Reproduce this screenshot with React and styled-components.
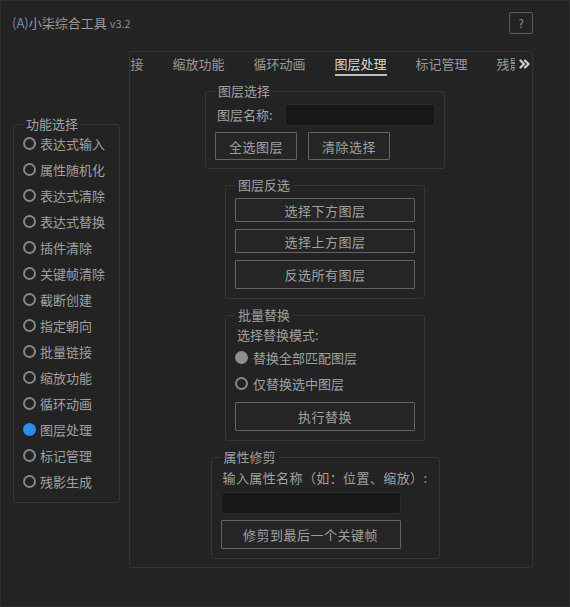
import { useLayoutEffect, useRef } from 'react'
import styled, { createGlobalStyle } from 'styled-components'

const GlobalStyle = createGlobalStyle`
    html, body {
        margin: 0;
        padding: 0;
        background: #232323;
    }
    * {
        box-sizing: border-box;
    }
`

const features = [
    '表达式输入', '属性随机化', '表达式清除', '表达式替换', '插件清除', '关键帧清除', '截断创建',
    '指定朝向', '批量链接', '缩放功能', '循环动画', '图层处理', '标记管理', '残影生成',
]

const ACTIVE = '图层处理'
// the tab strip is scrolled: tabs before this one are out of view
const FIRST_VISIBLE_TAB = '批量链接'

const Window = styled.div`
    width: 570px;
    height: 607px;
    background: #232323;
    border: 1px solid #2e2e2e;
    font-family: "Noto Sans CJK SC", "Liberation Sans", sans-serif;
    font-size: 13px;
    color: #a0a0a0;
    display: flex;
    flex-direction: column;
`

const Header = styled.div`
    height: 22px;
    margin-top: 11px;
    padding: 0 36px 0 11px;
    display: flex;
    align-items: center;
    justify-content: space-between;
`

const Title = styled.div`
    display: flex;
    align-items: baseline;
    line-height: 18px;
    color: #9a9a9a;

    .tag {
        color: #7589a6;
    }

    .version {
        font-size: 11px;
        margin-left: 3px;
        color: #8c8c8c;
    }
`

const HelpButton = styled.button`
    width: 24px;
    height: 22px;
    padding: 0;
    background: transparent;
    border: 1px solid #5c5c5c;
    border-radius: 2px;
    color: #9a9a9a;
    font-family: inherit;
    font-size: 11px;
    line-height: 1;
`

const Body = styled.div`
    margin-top: 17px;
    padding-left: 12px;
    display: flex;
    align-items: center;
    gap: 9px;
`

const Field = styled.fieldset`
    margin: 0;
    width: ${({ $w }) => $w}px;
    padding: 0 9px ${({ $pb }) => $pb ?? 8}px;
    border: 1px solid #363636;
    border-radius: 3px;
    display: flex;
    flex-direction: column;
    flex-shrink: 0;
`

const Legend = styled.legend`
    padding: 0 3px;
    line-height: 16px;
    color: #a0a0a0;
`

const RadioList = styled.div`
    margin-top: -2px;
    display: flex;
    flex-direction: column;
`

const RadioRow = styled.div`
    height: 26px;
    display: flex;
    align-items: center;
    gap: ${({ $gap }) => $gap ?? 5}px;
    color: #a0a0a0;
`

const RadioDot = styled.span`
    width: 13px;
    height: 13px;
    border-radius: 50%;
    flex-shrink: 0;
    border: 2px solid ${({ $state }) => ($state === 'on' ? '#2d8cec' : $state === 'grey' ? '#8e8e8e' : '#878787')};
    background: ${({ $state }) => ($state === 'on' ? '#2d8cec' : $state === 'grey' ? '#8e8e8e' : 'transparent')};
`

const Panel = styled.div`
    width: 404px;
    height: 517px;
    border: 1px solid #343434;
    border-radius: 3px;
    display: flex;
    flex-direction: column;
`

const TabBar = styled.div`
    height: 24px;
    display: flex;
    flex-shrink: 0;
`

const TabStrip = styled.div`
    flex: 1;
    position: relative;
    overflow: hidden;
`

const TabTrack = styled.div`
    display: flex;
    width: max-content;
`

const Tab = styled.div`
    padding: 3px 13.5px 0;
    flex-shrink: 0;
`

const TabLabel = styled.div`
    padding: 0 1px;
    display: flex;
    flex-direction: column;
    line-height: 18px;
    white-space: nowrap;
    color: ${({ $active }) => ($active ? '#d6d6d6' : '#989898')};

    &::after {
        content: '';
        height: 2px;
        margin-top: 1px;
        background: ${({ $active }) => ($active ? '#bdbdbd' : 'transparent')};
    }
`

const MoreButton = styled.div`
    width: 17px;
    display: flex;
    align-items: center;
    justify-content: center;
    padding-left: 2px;
`

const Content = styled.div`
    padding: 7px 12px 0 0;
    display: flex;
    flex-direction: column;
    align-items: center;
    gap: 8px;
`

const Row = styled.div`
    display: flex;
    align-items: center;
    gap: ${({ $gap }) => $gap ?? 0}px;
    margin-top: ${({ $mt }) => $mt ?? 0}px;
`

const Label = styled.div`
    width: ${({ $w }) => ($w ? `${$w}px` : 'auto')};
    padding-left: 2px;
    line-height: 18px;
    margin-top: ${({ $mt }) => $mt ?? 0}px;
    letter-spacing: ${({ $ls }) => $ls ?? 0}px;
    white-space: nowrap;
    color: #a0a0a0;
`

const TextInput = styled.input`
    width: ${({ $w }) => $w}px;
    height: 22px;
    margin-top: ${({ $mt }) => $mt ?? 0}px;
    background: #171717;
    border: 1px solid #2c2c2c;
    border-radius: 3px;
    outline: none;
`

const Button = styled.button`
    width: ${({ $w }) => $w}px;
    height: ${({ $h }) => $h}px;
    margin-top: ${({ $mt }) => $mt ?? 0}px;
    padding: 0;
    background: #252525;
    border: 1px solid #636363;
    border-radius: 1px;
    color: #a0a0a0;
    font-family: inherit;
    font-size: 13px;
    letter-spacing: 0.5px;
`

const App = () => {
    const stripRef = useRef(null)
    const activeRef = useRef(null)

    useLayoutEffect(() => {
        if (stripRef.current && activeRef.current) {
            stripRef.current.scrollLeft = activeRef.current.offsetLeft - 190
        }
    }, [])

    const tabs = features.slice(features.indexOf(FIRST_VISIBLE_TAB))

    return (
        <Window>
            <GlobalStyle />
            <Header>
                <Title>
                    <span className="tag">(A)</span>
                    <span>小柒综合工具</span>
                    <span className="version">v3.2</span>
                </Title>
                <HelpButton>?</HelpButton>
            </Header>

            <Body>
                <Field $w={107}>
                    <Legend>功能选择</Legend>
                    <RadioList>
                        {features.map(name => (
                            <RadioRow key={name} $gap={4}>
                                <RadioDot $state={name === ACTIVE ? 'on' : 'off'} />
                                {name}
                            </RadioRow>
                        ))}
                    </RadioList>
                </Field>

                <Panel>
                    <TabBar>
                        <TabStrip ref={stripRef}>
                            <TabTrack>
                                {tabs.map(name => (
                                    <Tab key={name} ref={name === ACTIVE ? activeRef : null}>
                                        <TabLabel $active={name === ACTIVE}>{name}</TabLabel>
                                    </Tab>
                                ))}
                            </TabTrack>
                        </TabStrip>
                        <MoreButton>
                            <svg width="11" height="10" viewBox="0 0 11 10" fill="none" stroke="#cfcfcf" strokeWidth="2.2" strokeLinecap="round" strokeLinejoin="round">
                                <path d="M1.5 1.5 L5 5 L1.5 8.5" />
                                <path d="M6 1.5 L9.5 5 L6 8.5" />
                            </svg>
                        </MoreButton>
                    </TabBar>

                    <Content>
                        <Field $w={240}>
                            <Legend>图层选择</Legend>
                            <Row $mt={5}>
                                <Label $w={70}>图层名称:</Label>
                                <TextInput $w={150} />
                            </Row>
                            <Row $mt={6} $gap={11}>
                                <Button $w={82} $h={28}>全选图层</Button>
                                <Button $w={82} $h={28}>清除选择</Button>
                            </Row>
                        </Field>

                        <Field $w={200} $pb={9}>
                            <Legend>图层反选</Legend>
                            <Button $w={180} $h={24} $mt={5}>选择下方图层</Button>
                            <Button $w={180} $h={24} $mt={7}>选择上方图层</Button>
                            <Button $w={180} $h={29} $mt={7}>反选所有图层</Button>
                        </Field>

                        <Field $w={200} $pb={9}>
                            <Legend>批量替换</Legend>
                            <Label $mt={3}>选择替换模式:</Label>
                            <RadioRow $gap={5}>
                                <RadioDot $state="grey" />
                                替换全部匹配图层
                            </RadioRow>
                            <RadioRow $gap={5}>
                                <RadioDot $state="off" />
                                仅替换选中图层
                            </RadioRow>
                            <Button $w={180} $h={29} $mt={6}>执行替换</Button>
                        </Field>

                        <Field $w={229} $pb={9}>
                            <Legend>属性修剪</Legend>
                            <Label $mt={4} $ls={0.4}>输入属性名称（如：位置、缩放）:</Label>
                            <TextInput $w={180} $mt={5} />
                            <Button $w={180} $h={29} $mt={6}>修剪到最后一个关键帧</Button>
                        </Field>
                    </Content>
                </Panel>
            </Body>
        </Window>
    )
}

export default App
